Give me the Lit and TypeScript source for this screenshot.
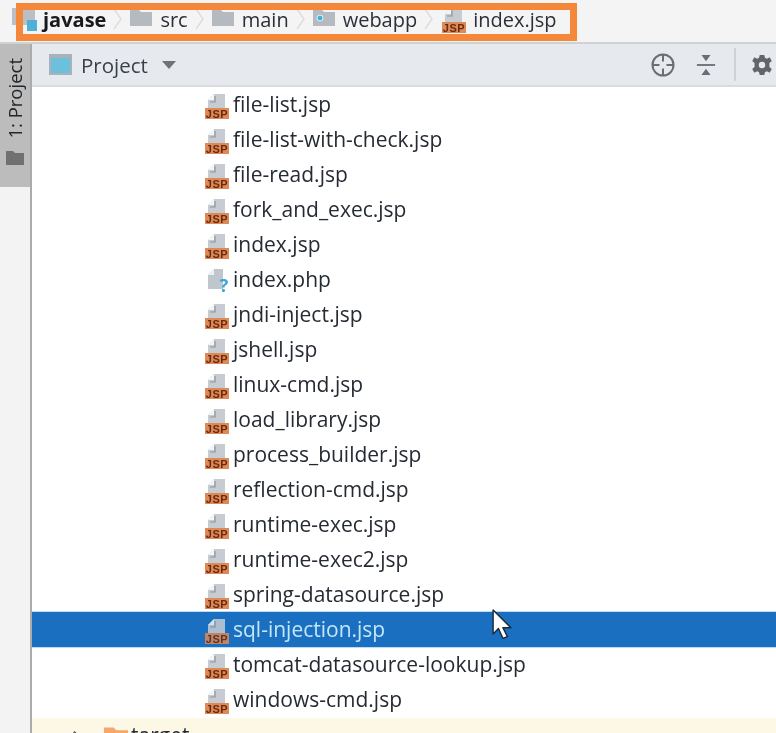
import { LitElement, html, css, svg } from "lit";
import { customElement } from "lit/decorators.js";

const files = [
  "file-list.jsp",
  "file-list-with-check.jsp",
  "file-read.jsp",
  "fork_and_exec.jsp",
  "index.jsp",
  "index.php",
  "jndi-inject.jsp",
  "jshell.jsp",
  "linux-cmd.jsp",
  "load_library.jsp",
  "process_builder.jsp",
  "reflection-cmd.jsp",
  "runtime-exec.jsp",
  "runtime-exec2.jsp",
  "spring-datasource.jsp",
  "sql-injection.jsp",
  "tomcat-datasource-lookup.jsp",
  "windows-cmd.jsp",
];

const jspIcon = () => html`
  <svg class="file-icon" width="26" height="28" viewBox="0 0 26 28">
    <path d="M10 2h11v14H4V8z" fill="#c6ccd2" />
    <path d="M10 2v6H4z" fill="#f4f5f7" />
    <path d="M11 4v6H6" fill="none" stroke="#8e959c" stroke-width="1.2" />
    <rect x="1" y="16" width="24" height="11" fill="#de8a58" />
    <text x="13" y="26" text-anchor="middle" class="jsp-label">JSP</text>
  </svg>
`;

const unknownIcon = () => html`
  <svg class="file-icon" width="26" height="28" viewBox="0 0 26 28">
    <path d="M10 2h9v20H4V8z" fill="#bfc6cc" />
    <path d="M10 2v6H4z" fill="#eef0f2" />
    <text x="20" y="25" text-anchor="middle" class="unknown-label">?</text>
  </svg>
`;

const chevron = () => html`
  <svg class="chevron" width="10" height="24" viewBox="0 0 10 24">
    <path d="M1 2l7 10-7 10" fill="none" stroke="#dcdcdc" stroke-width="1.4" />
  </svg>
`;

const folder = (dot = false) => html`
  <svg class="crumb-folder" width="22" height="16" viewBox="0 0 22 16">
    <path d="M0 0h9l2 2h11v14H0z" fill="#b4babf" />
    ${dot ? svg`<circle cx="7" cy="8" r="3" fill="#45aee0" stroke="#e6f2f8" stroke-width="1" />` : ""}
  </svg>
`;

@customElement("app-root")
export class AppRoot extends LitElement {
  static styles = css`
    :host {
      display: block;
      width: 776px;
      height: 733px;
      overflow: hidden;
      position: relative;
      background: #f3f3f3;
      font-family: "Open Sans", "Noto Sans", sans-serif;
      color: #2b3038;
      filter: blur(0.45px);
    }
    .crumbs {
      height: 44px;
      box-sizing: border-box;
      padding: 0 0 4px 12px;
      display: flex;
      align-items: center;
      border-bottom: 2px solid #cfd1d3;
      font-size: 20px;
      background: #f4f4f4;
    }
    .crumb {
      display: flex;
      align-items: center;
      gap: 8px;
    }
    .crumb-folder {
      margin-top: -2px;
    }
    .crumb .file-icon {
      margin: 2px -2px 0 0;
    }
    .chevron {
      margin: 0 7px 0 7px;
    }
    .project-name {
      font-weight: 700;
      color: #17191d;
    }
    .module {
      width: 25px;
      height: 23px;
      position: relative;
      margin-right: -2px;
      background: linear-gradient(#b9bfc4, #b9bfc4) left top / 23px 17px no-repeat;
    }
    .module::after {
      content: "";
      position: absolute;
      left: 15px;
      bottom: 0;
      width: 10px;
      height: 11px;
      background: #4eb2d8;
    }
    .highlight {
      position: absolute;
      left: 16px;
      top: 3px;
      width: 561px;
      height: 38px;
      box-sizing: border-box;
      border: 7px solid #f5873a;
    }
    .body {
      display: flex;
      height: 689px;
    }
    .rail {
      width: 32px;
      flex: none;
      box-sizing: border-box;
      background: #f3f3f3;
      border-right: 2px solid #a9abad;
    }
    .rail-tab {
      height: 143px;
      background: #bcbcbc;
      display: flex;
      flex-direction: column;
      align-items: center;
      padding-top: 14px;
      box-sizing: border-box;
      gap: 12px;
    }
    .rail-label {
      writing-mode: vertical-rl;
      transform: rotate(180deg);
      font-size: 18.5px;
      line-height: 22px;
      color: #23262a;
      white-space: nowrap;
    }
    .panel {
      flex: 1;
      min-width: 0;
      background: #fff;
    }
    .toolbar {
      height: 43px;
      box-sizing: border-box;
      display: flex;
      align-items: center;
      background: #e6e9ee;
      border-bottom: 2px solid #d9dbdd;
      padding-left: 17px;
      font-size: 20.5px;
      color: #3b3f46;
    }
    .view-icon {
      width: 23px;
      height: 21px;
      box-sizing: border-box;
      background: #6cc0dc;
      border: 2px solid #a9b2b9;
      border-top-width: 4px;
      margin-right: 9px;
    }
    .caret {
      width: 0;
      height: 0;
      margin-left: 14px;
      border: 7px solid transparent;
      border-top: 8px solid #6e7378;
      border-bottom: 0;
    }
    .tools {
      margin-left: auto;
      padding-right: 3px;
      display: flex;
      align-items: center;
    }
    .tools svg {
      display: block;
    }
    .stack-icon {
      margin-left: 21px;
    }
    .sep {
      width: 2px;
      height: 33px;
      background: #cfd2d6;
      margin: 0 15px 0 18px;
    }
    .list {
      display: flex;
      flex-direction: column;
    }
    .row {
      height: 35px;
      flex: none;
      display: flex;
      align-items: center;
      padding-left: 172px;
      gap: 3px;
      font-size: 21px;
      color: #262b33;
      white-space: nowrap;
    }
    .row span {
      margin-top: -2px;
    }
    .row.selected {
      background: #1a6fc0;
      color: #c4e6f8;
      box-shadow: 0 -1px 0 #bcdcf4, 0 1px 0 #bcdcf4;
    }
    .row.selected .file-icon {
      opacity: 0.85;
    }
    .file-icon {
      display: block;
      flex: none;
      margin-top: 2px;
    }
    .jsp-label {
      font: 700 11px "Liberation Sans", sans-serif;
      letter-spacing: 0.6px;
      fill: #6b2a0c;
    }
    .unknown-label {
      font: 700 18px "Open Sans", sans-serif;
      fill: #39a6d8;
    }
    .footer {
      height: 15px;
      margin-top: 1px;
      background: #fdf8e6;
      display: flex;
      align-items: flex-start;
      padding: 9px 0 0 40px;
      gap: 3px;
      font-size: 21px;
      color: #262b33;
    }
    .footer span {
      line-height: 22px;
      margin-top: -3px;
    }
    .arrow {
      margin-top: 4px;
    }
    .folder {
      margin-left: 16px;
    }
    .cursor {
      position: absolute;
      left: 491px;
      top: 609px;
    }
  `;

  render() {
    return html`
      <div class="crumbs">
        <div class="crumb"><span class="module"></span><span class="project-name">javase</span></div>
        ${chevron()}
        <div class="crumb">${folder()}<span>src</span></div>
        ${chevron()}
        <div class="crumb">${folder()}<span>main</span></div>
        ${chevron()}
        <div class="crumb">${folder(true)}<span>webapp</span></div>
        ${chevron()}
        <div class="crumb">${jspIcon()}<span>index.jsp</span></div>
      </div>
      <div class="body">
        <div class="rail">
          <div class="rail-tab">
            <span class="rail-label">1: Project</span>
            <svg width="18" height="14" viewBox="0 0 18 14"><path d="M0 0h7l2 2h9v12H0z" fill="#6f7072" /></svg>
          </div>
        </div>
        <div class="panel">
          <div class="toolbar">
            <span class="view-icon"></span>
            <span>Project</span>
            <span class="caret"></span>
            <div class="tools">
              <svg width="24" height="24" viewBox="0 0 24 24" fill="none" stroke="#6a6e73" stroke-width="2">
                <circle cx="12" cy="12" r="10.5" />
                <path d="M12 1.5v7M12 15.5v7M1.5 12h7M15.5 12h7" />
              </svg>
              <svg class="stack-icon" width="20" height="22" viewBox="0 0 22 24">
                <path d="M1 12h20" stroke="#6a6e73" stroke-width="2" />
                <path d="M6 1h10l-5 7zM6 23h10l-5-7z" fill="#6a6e73" />
              </svg>
              <span class="sep"></span>
              <svg width="22" height="22" viewBox="0 0 24 24">
                <path
                  fill="#62666b"
                  fill-rule="evenodd"
                  d="M9.5 1h5l.7 3.2 2.2 1 2.9-1.6 2.4 4-2.6 2.1v4.6l2.6 2.1-2.4 4-2.9-1.6-2.2 1-.7 3.2h-5l-.7-3.2-2.2-1-2.9 1.6-2.4-4 2.6-2.1V9.7L1.3 7.6l2.4-4 2.9 1.6 2.2-1zM12 8.5a3.5 3.5 0 100 7 3.5 3.5 0 000-7z"
                />
              </svg>
            </div>
          </div>
          <div class="list">
            ${files.map(
              (name) => html`
                <div class="row ${name === "sql-injection.jsp" ? "selected" : ""}">
                  ${name.endsWith(".php") ? unknownIcon() : jspIcon()}
                  <span>${name}</span>
                </div>
              `
            )}
          </div>
          <div class="footer">
            <svg class="arrow" width="12" height="12" viewBox="0 0 14 14">
              <path d="M2 1l8 7" stroke="#555" stroke-width="2.4" fill="none" />
            </svg>
            <svg class="folder" width="25" height="20" viewBox="0 0 26 20"><path d="M1 0h10l3 3h12v17H1z" fill="#f3a86c" /></svg>
            <span>target</span>
          </div>
        </div>
      </div>
      <div class="highlight"></div>
      <svg class="cursor" width="22" height="32" viewBox="0 0 24 36">
        <path d="M2 1v27l6-6 5 11 5-2-5-10h9z" fill="#fff" stroke="#1c2a38" stroke-width="1.6" stroke-linejoin="round" />
      </svg>
    `;
  }
}
